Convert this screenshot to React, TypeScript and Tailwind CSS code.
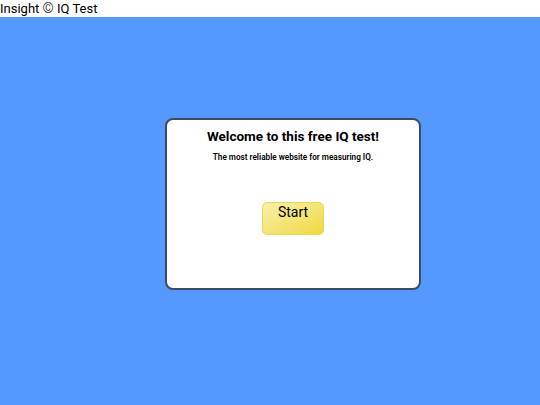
export default function App() {
  return (
    <div className="flex h-[405px] w-[540px] flex-col font-['Roboto',sans-serif]">
      <header className="h-[17px] bg-white text-[13px] leading-[17px] text-black">
        Insight <span className="text-[14px] font-light">©</span> IQ Test
      </header>
      <main className="flex-1 bg-[#5599ff] pl-[165px] pt-[101px]">
        <div className="flex h-[172px] w-[256px] flex-col items-center rounded-[8px] border-2 border-[#3d4a63] bg-white pt-[6px]">
          <h1 className="text-[13.5px] font-bold leading-[20px] text-black">Welcome to this free IQ test!</h1>
          <p className="mt-[6px] text-[8.2px] font-semibold leading-[10px] text-black">The most reliable website for measuring IQ.</p>
          <button className="mt-[40px] flex h-[33px] w-[62px] items-start justify-center rounded-[5px] border border-[#ebd955] bg-gradient-to-br from-[#f8f0a8] to-[#f0d832] pt-[1px] text-[14px] leading-[16px] text-black">
            Start
          </button>
        </div>
      </main>
    </div>
  );
}
